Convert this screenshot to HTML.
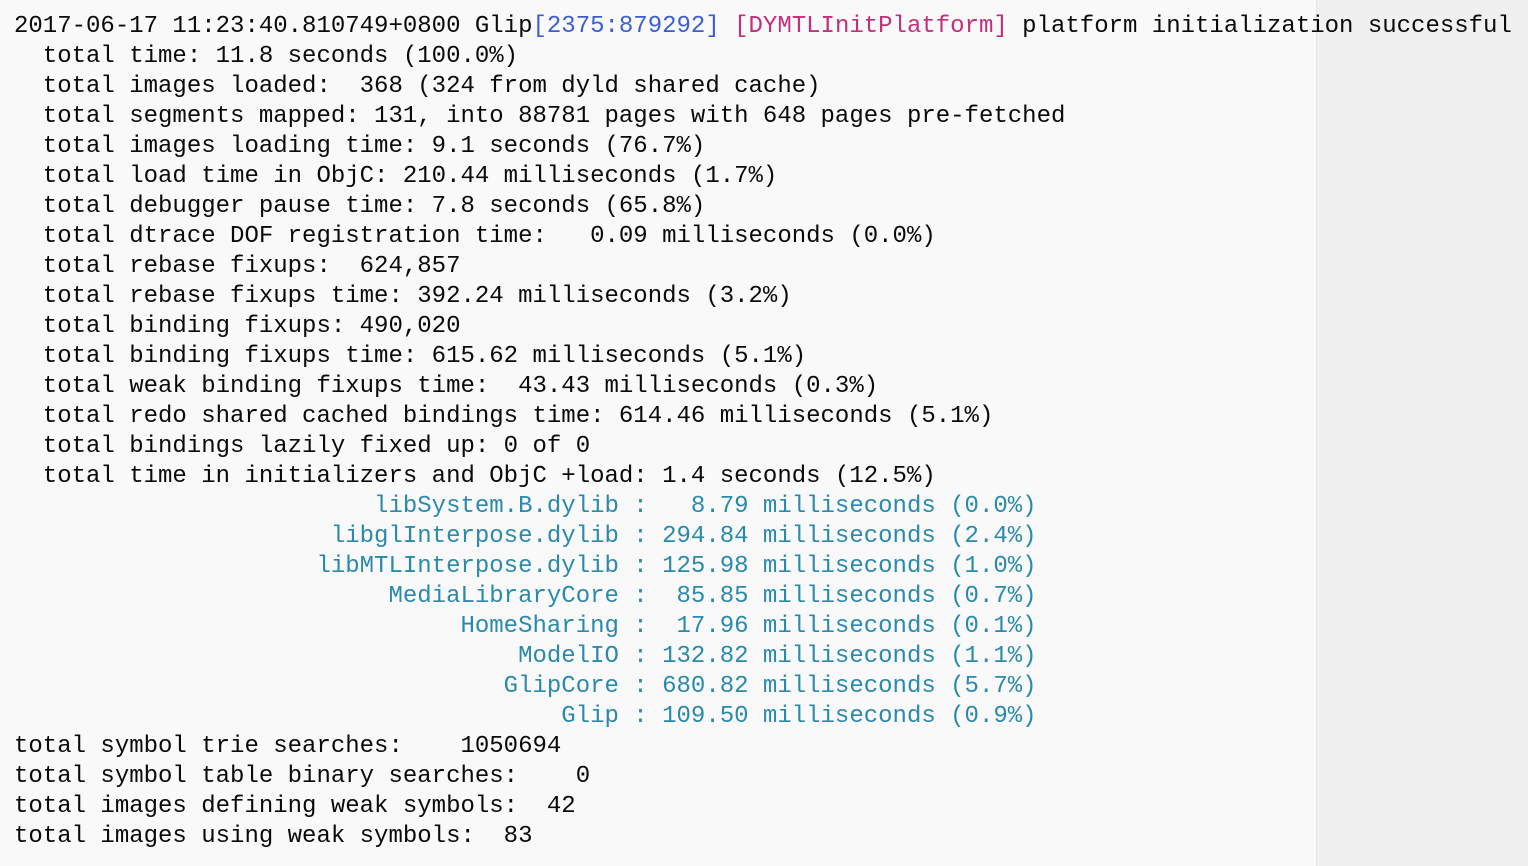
<!DOCTYPE html>
<html><head><meta charset="utf-8"><style>
html,body{margin:0;padding:0;width:1528px;height:866px;overflow:hidden;background:#f9f9f9;}
.r{position:absolute;left:1316px;top:0;width:212px;height:866px;background:#f0f0f0;border-left:1px solid #e8e8e8;}
pre{position:absolute;left:14px;top:12px;margin:0;font-family:"Liberation Mono",monospace;font-size:24px;line-height:30px;color:#0a0a0a;}
.b{color:#3b5fd0}.p{color:#c2307c}.c{color:#2a8aab}
</style></head><body><div class="r"></div>
<pre>2017-06-17 11:23:40.810749+0800 Glip<span class="b">[2375:879292]</span> <span class="p">[DYMTLInitPlatform]</span> platform initialization successful
  total time: 11.8 seconds (100.0%)
  total images loaded:  368 (324 from dyld shared cache)
  total segments mapped: 131, into 88781 pages with 648 pages pre-fetched
  total images loading time: 9.1 seconds (76.7%)
  total load time in ObjC: 210.44 milliseconds (1.7%)
  total debugger pause time: 7.8 seconds (65.8%)
  total dtrace DOF registration time:   0.09 milliseconds (0.0%)
  total rebase fixups:  624,857
  total rebase fixups time: 392.24 milliseconds (3.2%)
  total binding fixups: 490,020
  total binding fixups time: 615.62 milliseconds (5.1%)
  total weak binding fixups time:  43.43 milliseconds (0.3%)
  total redo shared cached bindings time: 614.46 milliseconds (5.1%)
  total bindings lazily fixed up: 0 of 0
  total time in initializers and ObjC +load: 1.4 seconds (12.5%)
<span class="c">                         libSystem.B.dylib :   8.79 milliseconds (0.0%)
                      libglInterpose.dylib : 294.84 milliseconds (2.4%)
                     libMTLInterpose.dylib : 125.98 milliseconds (1.0%)
                          MediaLibraryCore :  85.85 milliseconds (0.7%)
                               HomeSharing :  17.96 milliseconds (0.1%)
                                   ModelIO : 132.82 milliseconds (1.1%)
                                  GlipCore : 680.82 milliseconds (5.7%)
                                      Glip : 109.50 milliseconds (0.9%)</span>
total symbol trie searches:    1050694
total symbol table binary searches:    0
total images defining weak symbols:  42
total images using weak symbols:  83</pre>
</body></html>
